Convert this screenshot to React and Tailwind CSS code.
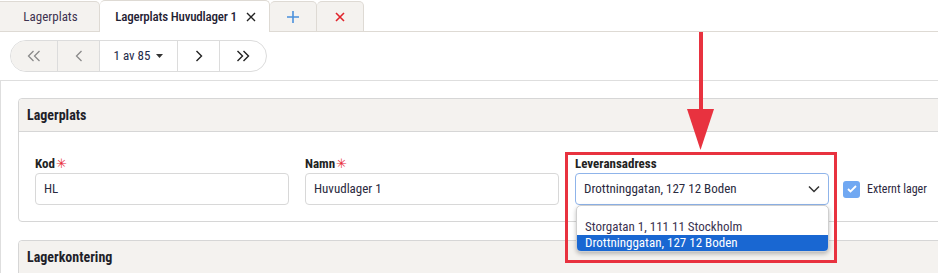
import React from 'react';

const font = { fontFamily: '"Roboto Condensed", "Liberation Sans Narrow", Roboto, sans-serif' };

function Tabs() {
  return (
    <div className="flex h-[32px] items-stretch">
      <div className="w-[100px] bg-[#f4f2ef] border border-l-0 border-[#dedad4] rounded-tr-[5px] mt-[1px] flex items-center justify-center pl-[2px] text-[13px] text-[#3d3350]">
        Lagerplats
      </div>
      <div className="w-[170px] bg-white border-t border-r border-[#dedad4] rounded-t-[5px] flex items-center justify-center gap-[9px] pl-[2px] text-[13px] tracking-[-0.2px] text-[#1f2233] font-medium">
        <span>Lagerplats Huvudlager 1</span>
        <svg width="10" height="10" viewBox="0 0 10 10" stroke="#222" strokeWidth="1.4"><path d="M1 1l8 8M9 1l-8 8" /></svg>
      </div>
      <div className="w-[47px] bg-[#f4f2ef] border border-l-0 border-[#dedad4] rounded-t-[5px] mt-[1px] flex items-center justify-center">
        <svg width="12" height="12" viewBox="0 0 12 12" stroke="#4a90dc" strokeWidth="1.6"><path d="M6 0v12M0 6h12" /></svg>
      </div>
      <div className="w-[47px] bg-[#f4f2ef] border border-l-0 border-[#dedad4] rounded-t-[5px] mt-[1px] flex items-center justify-center">
        <svg width="10" height="10" viewBox="0 0 10 10" stroke="#e0242c" strokeWidth="1.6"><path d="M1 1l8 8M9 1l-8 8" /></svg>
      </div>
      <div className="flex-1 border-b border-[#dedad4]" />
    </div>
  );
}

function Pager() {
  return (
    <div className="ml-[10px] mt-[8px] flex h-[32px] w-[257px] rounded-full border border-[#dcdcdc] overflow-hidden text-[#333]">
      <div className="w-[47px] bg-[#f4f2ef] flex items-center justify-center border-r border-[#dcdcdc]">
        <svg width="14" height="12" viewBox="0 0 14 12" fill="none" stroke="#8a8a8a" strokeWidth="1.3"><path d="M6.5 1L1.5 6l5 5M12.5 1l-5 5 5 5" /></svg>
      </div>
      <div className="w-[42px] bg-[#f4f2ef] flex items-center justify-center border-r border-[#dcdcdc]">
        <svg width="8" height="12" viewBox="0 0 8 12" fill="none" stroke="#8a8a8a" strokeWidth="1.3"><path d="M6.5 1l-5 5 5 5" /></svg>
      </div>
      <div className="w-[78px] flex items-center justify-center gap-[6px] border-r border-[#dcdcdc] text-[13px] text-[#1e2a4a]">
        <span>1 av 85</span>
        <svg width="7" height="4" viewBox="0 0 7 4" fill="#333"><path d="M0 0h7L3.5 4z" /></svg>
      </div>
      <div className="w-[42px] flex items-center justify-center border-r border-[#dcdcdc]">
        <svg width="8" height="12" viewBox="0 0 8 12" fill="none" stroke="#222" strokeWidth="1.4"><path d="M1.5 1l5 5-5 5" /></svg>
      </div>
      <div className="flex-1 flex items-center justify-center">
        <svg width="14" height="12" viewBox="0 0 14 12" fill="none" stroke="#222" strokeWidth="1.4"><path d="M1.5 1l5 5-5 5M7.5 1l5 5-5 5" /></svg>
      </div>
    </div>
  );
}

function Field({ label, required, value, width }) {
  return (
    <div className="flex flex-col" style={{ width }}>
      <div className="h-[17px] flex items-center text-[13px] font-bold text-[#222]">
        {label}
        {required && <span className="text-[#e8303a] font-normal ml-[1px]">✳</span>}
      </div>
      <div className="mt-[1px] h-[32px] border border-[#d8d8d8] rounded-[4px] flex items-center px-[8px] text-[13px] text-[#2a2a40]">
        {value}
      </div>
    </div>
  );
}

function Panel({ title, children }) {
  return (
    <div className="w-[960px] border border-[#d6d6d6] rounded-[4px] bg-white">
      <div className="h-[33px] bg-[#f4f2ef] border-b border-[#d6d6d6] rounded-t-[4px] flex items-center px-[8px] text-[14px] font-bold text-[#1f1f2a]">
        {title}
      </div>
      {children}
    </div>
  );
}

export default function App() {
  return (
    <div className="relative w-[938px] h-[273px] overflow-hidden bg-white" style={font}>
      <Tabs />
      <Pager />
      <div className="mt-[8px] border-t border-l border-[#dedede] pt-[17px] pl-[17px] flex flex-col gap-[18px]">
        <Panel title="Lagerplats">
          <div className="flex items-end gap-[16px] pl-[16px] pt-[23px] pb-[16px]">
            <Field label="Kod" required value="HL" width={254} />
            <Field label="Namn" required value="Huvudlager 1" width={254} />
            <div className="relative flex flex-col w-[254px]">
              <div className="h-[17px] flex items-center text-[13px] font-bold text-[#222]">Leveransadress</div>
              <div className="mt-[1px] h-[32px] border border-[#8fb4ea] rounded-[4px] flex items-center justify-between px-[8px] text-[13px] text-[#2a2a40]">
                <span>Drottninggatan, 127 12 Boden</span>
                <svg width="12" height="8" viewBox="0 0 12 8" fill="none" stroke="#333" strokeWidth="1.5"><path d="M1 1.5l5 5 5-5" /></svg>
              </div>
              <div className="absolute left-[1px] top-[50px] w-[253px] h-[47px] bg-white border border-[#cfcfcf] rounded-[5px] shadow-[0_2px_4px_rgba(0,0,0,0.25)] overflow-hidden flex flex-col justify-end text-[13px] z-10">
                <div className="h-[16px] px-[8px] flex items-center text-[#3b3350]">Storgatan 1, 111 11 Stockholm</div>
                <div className="h-[16px] px-[8px] flex items-center bg-[#1967d2] text-white">Drottninggatan, 127 12 Boden</div>
              </div>
            </div>
            <div className="h-[32px] -ml-[2px] flex items-center gap-[7px] text-[12px] text-[#2d2840]">
              <div className="w-[17px] h-[17px] rounded-[3px] bg-[#70a8f2] flex items-center justify-center">
                <svg width="10" height="8" viewBox="0 0 10 8" fill="none" stroke="white" strokeWidth="1.8"><path d="M1 4l2.5 2.5L9 1" /></svg>
              </div>
              <span>Externt lager</span>
            </div>
          </div>
        </Panel>
        <Panel title="Lagerkontering">
          <div className="h-[40px]" />
        </Panel>
      </div>
      <div className="absolute left-[565px] top-[152px] w-[272px] h-[111px] border-[3px] border-[#e8323f] z-20 pointer-events-none" />
      <svg className="absolute left-[684px] top-[32px] z-20" width="32" height="120" viewBox="0 0 32 120">
        <rect x="15" y="0" width="4" height="80" fill="#e8323f" />
        <path d="M3 77h27L16.5 118z" fill="#e8323f" />
      </svg>
    </div>
  );
}
